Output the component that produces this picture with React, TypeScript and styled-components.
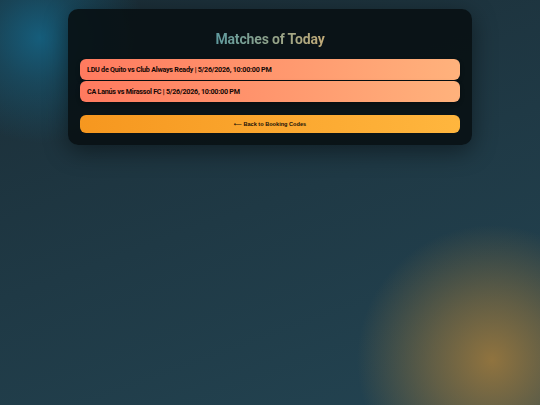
import React from "react";
import styled, { createGlobalStyle } from "styled-components";

const GlobalStyle = createGlobalStyle`
	html, body {
		margin: 0;
		padding: 0;
		height: 100%;
	}

	body {
		min-height: 405px;
		font-family: Roboto, "Liberation Sans", sans-serif;
		background:
			radial-gradient(circle at 40px 38px, rgba(21, 98, 130, 0.9) 0, rgba(21, 98, 130, 0.45) 45px, rgba(21, 98, 130, 0) 105px),
			radial-gradient(circle at 492px 360px, rgba(150, 118, 62, 0.95) 0, rgba(150, 118, 62, 0.55) 60px, rgba(150, 118, 62, 0) 135px),
			linear-gradient(160deg, #1b2d36 0%, #1f3945 50%, #234452 100%);
	}
`;

const matches = [
	{ id: 1, home: "LDU de Quito", away: "Club Always Ready", date: "5/26/2026, 10:00:00 PM" },
	{ id: 2, home: "CA Lanús", away: "Mirassol FC", date: "5/26/2026, 10:00:00 PM" },
];

const App: React.FC = () => {
	return (
		<>
			<GlobalStyle />
			<Page>
				<Card>
					<Title>Matches of Today</Title>
					<MatchList>
						{matches.map((m) => (
							<MatchRow key={m.id}>
								{m.home} vs {m.away} | {m.date}
							</MatchRow>
						))}
					</MatchList>
					<BackButton type='button'>⟵ Back to Booking Codes</BackButton>
				</Card>
			</Page>
		</>
	);
};

export default App;

const Page = styled.main`
	display: flex;
	justify-content: center;
	padding-top: 9px;
`;

const Card = styled.section`
	width: 404px;
	box-sizing: border-box;
	padding: 21px 12px 12px;
	border-radius: 10px;
	background: rgba(9, 17, 20, 0.93);
	box-shadow: 0 6px 24px rgba(0, 0, 0, 0.45);
	display: flex;
	flex-direction: column;
`;

const Title = styled.h1`
	margin: 0 0 11px;
	text-align: center;
	font-size: 14px;
	font-weight: 700;
	line-height: 18px;
	letter-spacing: -0.15px;
	background: linear-gradient(90deg, #5e9a9e 0%, #c2ab78 100%);
	-webkit-background-clip: text;
	background-clip: text;
	color: transparent;
	align-self: center;
`;

const MatchList = styled.div`
	display: flex;
	flex-direction: column;
	gap: 1px;
`;

const MatchRow = styled.div`
	height: 21px;
	display: flex;
	align-items: center;
	padding: 0 7px;
	border-radius: 6px;
	background: linear-gradient(90deg, #ff7a5f 0%, #ffb27c 100%);
	box-shadow: 0 2px 4px rgba(0, 0, 0, 0.3);
	color: #140805;
	font-size: 7.2px;
	font-weight: 700;
	letter-spacing: -0.25px;
`;

const BackButton = styled.button`
	margin-top: 13px;
	height: 18px;
	border: none;
	border-radius: 6px;
	background: linear-gradient(90deg, #f6971f 0%, #ffb63e 100%);
	color: #1a1208;
	font-family: "Liberation Sans", "DejaVu Sans", Arial, sans-serif;
	font-size: 5.6px;
	font-weight: 700;
	cursor: pointer;
`;
